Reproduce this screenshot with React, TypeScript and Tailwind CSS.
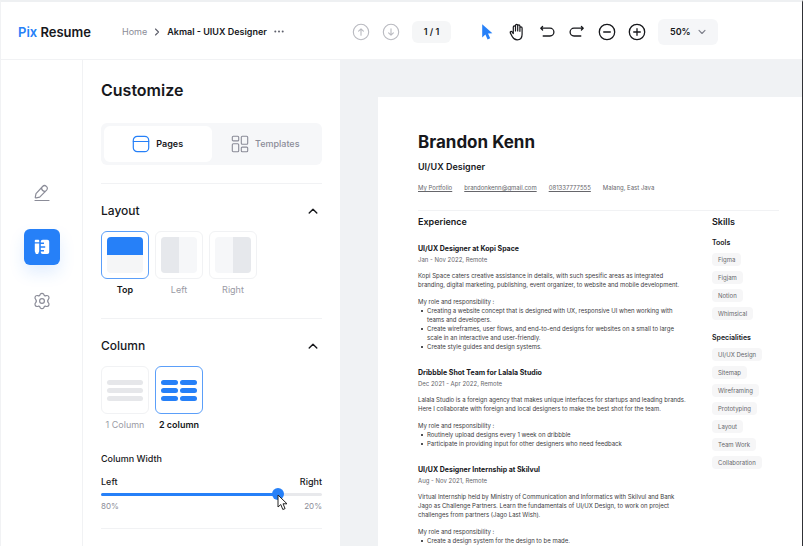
import { useState, type ReactNode } from "react";

const stroke = {
  fill: "none",
  stroke: "currentColor",
  strokeLinecap: "round" as const,
  strokeLinejoin: "round" as const,
};

function ChevronUp() {
  return (
    <svg width="10" height="10" viewBox="0 0 10 10" {...stroke} strokeWidth="1.4">
      <path d="M1.2 7 5 3.2 8.8 7" />
    </svg>
  );
}

function CircleIcon({ d, width }: { d: string; width: number }) {
  return (
    <svg width="18" height="18" viewBox="0 0 18 18" {...stroke} strokeWidth={width}>
      <circle cx="9" cy="9" r="7.7" />
      <path d={d} />
    </svg>
  );
}

function IconButton({ label, className = "", children }: { label: string; className?: string; children: ReactNode }) {
  return (
    <button aria-label={label} className={"flex size-[18px] items-center justify-center " + className}>
      {children}
    </button>
  );
}

function Header() {
  return (
    <header className="flex h-[58px] shrink-0 items-center border-b border-[#f1f2f4] bg-white pt-[2px]">
      <div className="flex w-[339px] shrink-0 items-center pl-[17px]">
        <a href="#" className="w-[104px] text-[13px] leading-4 font-semibold text-[#17181c]">
          <span className="text-[#2680f8]">Pix</span> Resume
        </a>
        <nav aria-label="Breadcrumb" className="flex items-center gap-[7px] text-[9px] leading-3">
          <a href="#" className="text-[#8b8c98]">Home</a>
          <svg width="6" height="8" viewBox="0 0 6 8" {...stroke} strokeWidth="1.1" className="text-[#5d5f6b]">
            <path d="M1.5 1 4.5 4l-3 3" />
          </svg>
          <span className="font-semibold whitespace-nowrap text-[#17181c]">Akmal - UIUX Designer</span>
          <button aria-label="More options" className="text-[#5d5f6b]">
            <svg width="10" height="3" viewBox="0 0 10 3" fill="currentColor">
              <circle cx="1.3" cy="1.5" r="1" />
              <circle cx="5" cy="1.5" r="1" />
              <circle cx="8.7" cy="1.5" r="1" />
            </svg>
          </button>
        </nav>
      </div>
      <div className="flex items-center gap-3 pl-3 text-[#17181c]">
        <IconButton label="Previous page" className="text-[#b9bac0]">
          <CircleIcon width={1.1} d="M9 12.3V6M6.6 8.2 9 5.8l2.4 2.4" />
        </IconButton>
        <IconButton label="Next page" className="text-[#b9bac0]">
          <CircleIcon width={1.1} d="M9 5.7V12M6.6 9.8 9 12.2l2.4-2.4" />
        </IconButton>
        <output className="flex h-[22px] w-[39px] items-center justify-center rounded-md bg-[#f5f6f7] text-[9px] font-semibold">
          1 / 1
        </output>
        <div className="flex items-center gap-3 pl-[15px]">
          <IconButton label="Select" className="text-[#2680f8]">
            <svg width="18" height="18" viewBox="0 0 18 18" fill="currentColor">
              <path d="M4.2 1.2v13.3l3.2-3 2.2 4.9 2.6-1.1-2.2-4.8 4.4-.3z" />
            </svg>
          </IconButton>
          <IconButton label="Pan">
            <svg width="18" height="18" viewBox="0 0 18 18" {...stroke} strokeWidth="1.2">
              <path d="M5.3 10.6V3.9a1.1 1.1 0 0 1 2.2 0V8V2.4a1.1 1.1 0 0 1 2.2 0V8V3a1.1 1.1 0 0 1 2.2 0v5.3V4.9a1.1 1.1 0 0 1 2.2 0v6.3c0 3.4-1.8 5.6-4.9 5.6-2.5 0-3.9-1.1-5-3.3L2.3 9.9c-.5-1.2 1-1.9 1.8-1z" />
            </svg>
          </IconButton>
          <IconButton label="Undo">
            <svg width="16" height="16" viewBox="0 0 16 16" {...stroke} strokeWidth="1.3">
              <path d="M3.6 2.4 1.8 4.2 3.6 6M2 4.2h9a3.9 3.9 0 0 1 0 7.8H4.2" />
            </svg>
          </IconButton>
          <IconButton label="Redo">
            <svg width="16" height="16" viewBox="0 0 16 16" {...stroke} strokeWidth="1.3">
              <path d="M12.4 2.4l1.8 1.8L12.4 6M14 4.2H5a3.9 3.9 0 0 0 0 7.8h6.8" />
            </svg>
          </IconButton>
          <IconButton label="Zoom out">
            <CircleIcon width={1.3} d="M5.7 9h6.6" />
          </IconButton>
          <IconButton label="Zoom in">
            <CircleIcon width={1.3} d="M5.7 9h6.6M9 5.7v6.6" />
          </IconButton>
          <div className="grid items-center">
            <select
              aria-label="Zoom level"
              defaultValue="50%"
              className="col-start-1 row-start-1 h-[26px] w-[60px] appearance-none rounded-md bg-[#f5f6f8] pl-3 text-[9px] font-semibold"
            >
              <option>50%</option>
              <option>100%</option>
            </select>
            <svg width="8" height="6" viewBox="0 0 8 6" {...stroke} strokeWidth="1.1" className="pointer-events-none col-start-1 row-start-1 mr-3 justify-self-end text-[#7d7f8a]">
              <path d="M1 1.3 4 4.5l3-3.2" />
            </svg>
          </div>
        </div>
      </div>
    </header>
  );
}

function Rail() {
  return (
    <nav aria-label="Tools" className="flex w-[82px] shrink-0 flex-col items-center gap-[18px] border-r border-[#f1f2f4] pt-[115px]">
      <button aria-label="Edit" className="flex size-9 items-center justify-center text-[#8b8c98]">
        <svg width="18" height="18" viewBox="0 0 18 18" {...stroke} strokeWidth="1.2">
          <path d="M2.3 13.2 3 9.7l6.6-7.2c1.2-1.3 2.7-1.1 3.8-.1s1.4 2.4.2 3.7l-6.9 7.1-3.5.6c-.6.1-1-.1-.9-.6zM8.4 3.9c.3 2.1 1.7 3.5 3.8 3.8M2 16.5h14" />
        </svg>
      </button>
      <button aria-label="Customize" className="flex size-9 items-center justify-center rounded-md bg-[#2680f8] text-white shadow-[0_8px_16px_#2680f822]">
        <svg width="16" height="16" viewBox="0 0 16 16" fill="currentColor">
          <path d="M.8 4.4h4.4v7.9L4.1 15H1.9L.8 12.3zM1.9.8h2.2c.7 0 1.1.4 1.1 1v1.5H.8V1.8c0-.6.4-1 1.1-1z" />
          <path d="M8.8.8h4.4c1.3 0 2 .7 2 2V13c0 1.3-.7 2-2 2H8.8c-1.3 0-2-.7-2-2v-.6h3.2v-1.5H6.8V8.7h4.4V7.2H6.8V5h3.2V3.5H6.8v-.7c0-1.3.7-2 2-2z" />
        </svg>
      </button>
      <button aria-label="Settings" className="flex size-9 items-center justify-center text-[#8b8c98]">
        <svg width="18" height="18" viewBox="0 0 18 18" {...stroke} strokeWidth="1.2">
          <circle cx="9" cy="9" r="2.4" />
          <path d="M7.3 2.2c.9-1 2.5-1 3.4 0 .4 1.5 1.2 1.9 2.5 1.4 1.2-.3 2.3.2 2.7 1.4.3.9.2 1.5-.4 2.1-1 1.1-1 2.7 0 3.8.6.6.7 1.2.4 2.1-.4 1.2-1.5 1.7-2.7 1.4-1.3-.5-2.1-.1-2.5 1.4-.9 1-2.5 1-3.4 0-.4-1.5-1.2-1.9-2.5-1.4-1.2.3-2.3-.2-2.7-1.4-.3-.9-.2-1.5.4-2.1 1-1.1 1-2.7 0-3.8-.6-.6-.7-1.2-.4-2.1.4-1.2 1.5-1.7 2.7-1.4 1.3.5 2.1.1 2.5-1.4z" />
        </svg>
      </button>
    </nav>
  );
}

function OptionCard({ label, selected, onSelect, children }: { label: string; selected: boolean; onSelect: () => void; children: ReactNode }) {
  return (
    <button
      aria-pressed={selected}
      onClick={onSelect}
      className={"flex w-12 flex-col items-center gap-[5px] text-[9px] leading-3 whitespace-nowrap " + (selected ? "font-semibold text-[#17181c]" : "text-[#9a9ba5]")}
    >
      <span className={"flex size-12 items-center justify-center rounded-md border bg-white " + (selected ? "border-[#5b9ff9]" : "border-[#f1f2f4]")}>
        {children}
      </span>
      {label}
    </button>
  );
}

function Section({ title, children }: { title: string; children: ReactNode }) {
  return (
    <section className="border-t border-[#f1f2f4] pt-[19px]">
      <h2>
        <button aria-expanded="true" className="flex w-full items-center justify-between pr-1 text-xs leading-4 font-medium text-[#17181c]">
          {title}
          <ChevronUp />
        </button>
      </h2>
      {children}
    </section>
  );
}

function WidthSlider() {
  const [width, setWidth] = useState(80);
  return (
    <div className="pb-4 text-[9px] leading-3 text-[#17181c]">
      <h3 className="pt-[22px] font-medium">Column Width</h3>
      <div className="flex justify-between pt-[11px] font-medium">
        <label htmlFor="column-width">Left</label>
        <span>Right</span>
      </div>
      <div className="relative grid h-3 items-center">
        <div className="col-start-1 row-start-1 h-[3px] overflow-hidden rounded-full bg-[#e8e9ec]">
          <div className="h-full bg-[#2680f8]" style={{ width: `${width}%` }} />
        </div>
        <input
          id="column-width"
          type="range"
          value={width}
          onChange={(e) => setWidth(Number(e.target.value))}
          className="col-start-1 row-start-1 -mx-[6px] h-3 appearance-none bg-transparent [&::-webkit-slider-thumb]:size-3 [&::-webkit-slider-thumb]:appearance-none [&::-webkit-slider-thumb]:rounded-full [&::-webkit-slider-thumb]:bg-[#2680f8]"
        />
        <svg width="12" height="17" viewBox="0 0 12 17" className="pointer-events-none absolute top-[6px]" style={{ left: `${width - 0.5}%` }}>
          <path d="M1 1v12l2.8-2.5 2 5 2.3-.9L6 9.8h4z" fill="#fff" stroke="#222" strokeWidth="1" strokeLinejoin="round" />
        </svg>
      </div>
      <div className="flex justify-between text-[8px] text-[#8b8c98]">
        <span>{width}%</span>
        <span>{100 - width}%</span>
      </div>
    </div>
  );
}

function Customize() {
  const [layout, setLayout] = useState("Top");
  const [columns, setColumns] = useState(2);
  return (
    <aside className="flex w-[257px] shrink-0 flex-col bg-white px-[18px] pt-[18px]">
      <h1 className="text-[16px] leading-6 font-semibold text-[#17181c]">Customize</h1>
      <div role="tablist" className="mt-[21px] mb-[18px] grid h-[42px] grid-cols-2 rounded-md bg-[#f6f7f9] p-[3px] text-[9px]">
        <button role="tab" aria-selected="true" className="flex items-center justify-center gap-[6px] rounded-md bg-white font-semibold text-[#17181c]">
          <svg width="18" height="18" viewBox="0 0 18 18" {...stroke} strokeWidth="1.2" className="text-[#2680f8]">
            <rect x="1.3" y="1.3" width="15.4" height="15.4" rx="4" />
            <path d="M1.3 6.5h15.4" />
          </svg>
          Pages
        </button>
        <button role="tab" aria-selected="false" className="flex items-center justify-center gap-[6px] font-medium text-[#8b8c98]">
          <svg width="18" height="18" viewBox="0 0 18 18" {...stroke} strokeWidth="1.1">
            <rect x="1.3" y="1.3" width="6.4" height="4.6" rx="1" />
            <rect x="10.3" y="1.3" width="6.4" height="8" rx="1" />
            <rect x="1.3" y="8.7" width="6.4" height="8" rx="1" />
            <rect x="10.3" y="12.1" width="6.4" height="4.6" rx="1" />
          </svg>
          Templates
        </button>
      </div>
      <Section title="Layout">
        <div className="flex gap-[6px] pt-3 pb-[22px]">
          <OptionCard label="Top" selected={layout === "Top"} onSelect={() => setLayout("Top")}>
            <span className="flex size-9 flex-col overflow-hidden rounded-sm bg-[#f5f6f7]">
              <span className="h-1/2 bg-[#2680f8]" />
            </span>
          </OptionCard>
          <OptionCard label="Left" selected={layout === "Left"} onSelect={() => setLayout("Left")}>
            <span className="flex size-9 overflow-hidden rounded-sm bg-[#f6f7f9]">
              <span className="w-1/2 bg-[#e6e8ec]" />
            </span>
          </OptionCard>
          <OptionCard label="Right" selected={layout === "Right"} onSelect={() => setLayout("Right")}>
            <span className="flex size-9 justify-end overflow-hidden rounded-sm bg-[#f6f7f9]">
              <span className="w-1/2 bg-[#e6e8ec]" />
            </span>
          </OptionCard>
        </div>
      </Section>
      <Section title="Column">
        <div className="flex gap-[6px] pt-3">
          <OptionCard label="1 Column" selected={columns === 1} onSelect={() => setColumns(1)}>
            <span className="grid w-9 gap-[3px]">
              {[0, 1, 2].map((i) => (
                <span key={i} className="h-[5px] rounded-full bg-[#e6e7ea]" />
              ))}
            </span>
          </OptionCard>
          <OptionCard label="2 column" selected={columns === 2} onSelect={() => setColumns(2)}>
            <span className="grid w-9 grid-cols-2 gap-x-[2px] gap-y-[3px]">
              {[0, 1, 2, 3, 4, 5].map((i) => (
                <span key={i} className="h-[5px] rounded-full bg-[#2680f8]" />
              ))}
            </span>
          </OptionCard>
        </div>
        <WidthSlider />
      </Section>
      <div className="border-t border-[#f1f2f4]" />
    </aside>
  );
}

const jobs = [
  {
    title: "UI/UX Designer at Kopi Space",
    date: "Jan - Nov 2022, Remote",
    about: ["Kopi Space caters creative assistance in details, with such spesific areas as integrated", "branding, digital marketing, publishing, event organizer, to website and mobile development."],
    duties: [
      ["Creating a website concept that is designed with UX, responsive UI when working with", "teams and developers."],
      ["Create wireframes, user flows, and end-to-end designs for websites on a small to large", "scale in an interactive and user-friendly."],
      ["Create style guides and design systems."],
    ],
  },
  {
    title: "Dribbble Shot Team for Lalala Studio",
    date: "Dec 2021 - Apr 2022, Remote",
    about: ["Lalala Studio is a foreign agency that makes unique interfaces for startups and leading brands.", "Here I collaborate with foreign and local designers to make the best shot for the team."],
    duties: [["Routinely upload designs every 1 week on dribbble"], ["Participate in providing input for other designers who need feedback"]],
  },
  {
    title: "UI/UX Designer Internship at Skilvul",
    date: "Aug - Nov 2021, Remote",
    about: ["Virtual Internship held by Ministry of Communication and Informatics with Skilvul and Bank", "Jago as Challenge Partners. Learn the fundamentals of UI/UX Design, to work on project", "challenges from partners (Jago Last Wish)."],
    duties: [["Create a design system for the design to be made."]],
  },
];

const skills = [
  { group: "Tools", items: ["Figma", "Figjam", "Notion", "Whimsical"] },
  { group: "Specialities", items: ["UI/UX Design", "Sitemap", "Wireframing", "Prototyping", "Layout", "Team Work", "Collaboration"] },
];

function Lines({ lines }: { lines: string[] }) {
  return (
    <>
      {lines.map((line) => (
        <span key={line} className="block whitespace-nowrap">{line}</span>
      ))}
    </>
  );
}

function Resume() {
  return (
    <article className="min-h-full bg-white pt-[33px] pr-[23px] pl-10 text-[6px] leading-[9px] text-[#3a3a3d]">
      <h1 className="text-[17px] leading-6 font-bold text-[#17181c]">Brandon Kenn</h1>
      <p className="pt-[7px] text-[9px] leading-3 font-semibold text-[#17181c]">UI/UX Designer</p>
      <div className="flex gap-3 pt-[10px] pb-[18px] text-[#66666b]">
        <a href="#" className="underline underline-offset-1">My Portfolio</a>
        <a href="#" className="underline underline-offset-1">brandonkenn@gmail.com</a>
        <a href="#" className="underline underline-offset-1">081337777555</a>
        <span>Malang, East Java</span>
      </div>
      <div className="flex justify-between border-t border-[#f1f2f4] pt-[5px]">
        <section>
          <h2 className="pb-[15px] text-[9px] leading-3 font-semibold text-[#17181c]">Experience</h2>
          {jobs.map((job) => (
            <div key={job.title} className="pb-4">
              <h3 className="text-[7px] leading-3 font-bold text-[#17181c]">{job.title}</h3>
              <p className="text-[#66666b]">{job.date}</p>
              <p className="pt-[7px]"><Lines lines={job.about} /></p>
              <p className="pt-2">My role and responsibility :</p>
              <ul>
                {job.duties.map((duty) => (
                  <li key={duty[0]} className="flex gap-1 pl-[3px]">
                    <span className="mt-[4px] size-[2px] rounded-full bg-[#17181c]" />
                    <span><Lines lines={duty} /></span>
                  </li>
                ))}
              </ul>
            </div>
          ))}
        </section>
        <section className="w-[67px]">
          <h2 className="pb-[9px] text-[9px] leading-3 font-semibold text-[#17181c]">Skills</h2>
          {skills.map(({ group, items }) => (
            <div key={group} className="pb-3">
              <h3 className="pb-1 text-[7px] leading-3 font-semibold text-[#17181c]">{group}</h3>
              <ul className="flex flex-col items-start gap-[5px]">
                {items.map((item) => (
                  <li key={item} className="rounded-sm bg-[#f6f6f7] px-[6px] py-[2px] text-[#66666b]">{item}</li>
                ))}
              </ul>
            </div>
          ))}
        </section>
      </div>
    </article>
  );
}

export default function App() {
  return (
    <div className="flex h-screen flex-col overflow-hidden border-t-2 border-r border-l border-t-[#eef0f2] border-r-[#303136] border-l-[#f1f2f4] bg-white font-['Inter','Liberation_Sans',sans-serif]">
      <Header />
      <div className="flex min-h-0 flex-1">
        <Rail />
        <Customize />
        <main className="min-w-0 flex-1 overflow-hidden bg-[#f0f2f4] pt-[37px] pl-[38px]">
          <Resume />
        </main>
      </div>
    </div>
  );
}
